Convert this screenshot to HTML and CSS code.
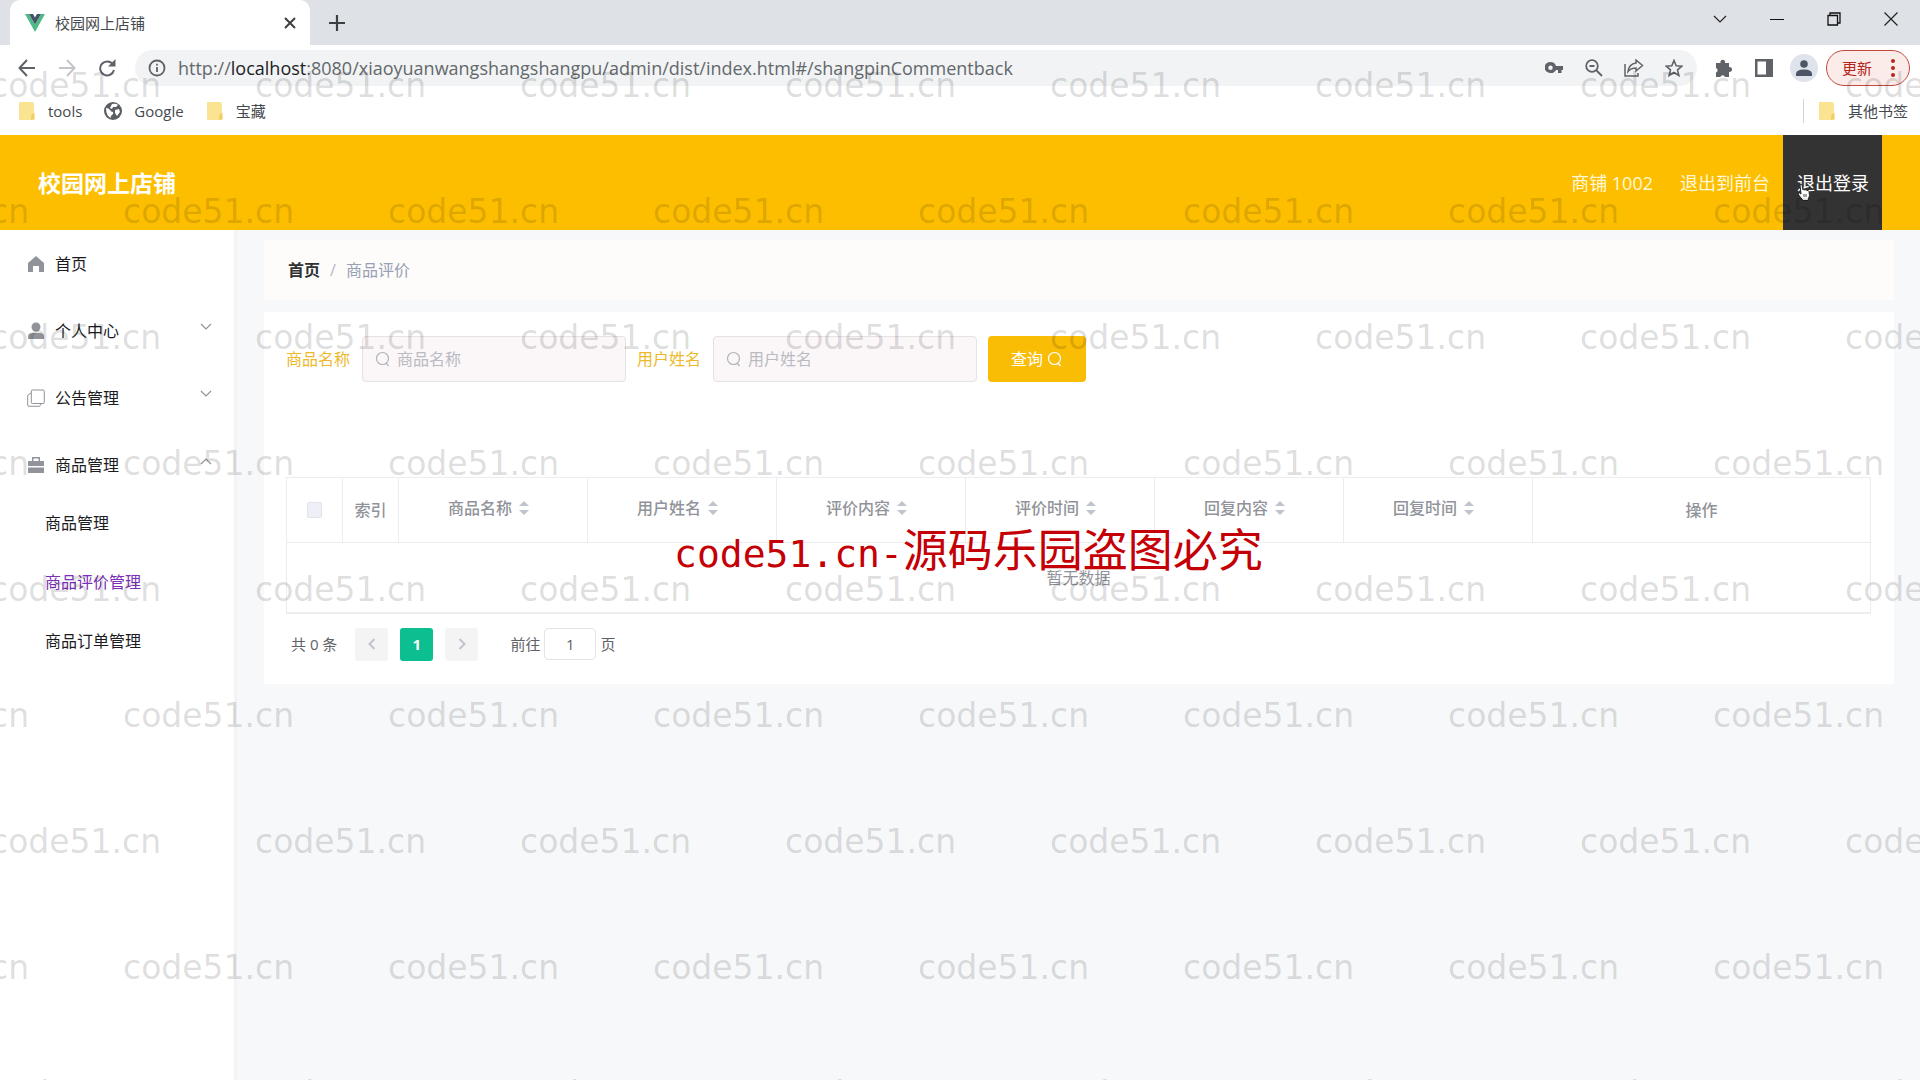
FILE: index.html
```html
<!DOCTYPE html>
<html lang="zh-CN">
<head>
<meta charset="utf-8">
<title>校园网上店铺</title>
<link rel="stylesheet" href="styles.css">
</head>
<body>
<svg class="defs" aria-hidden="true">
  <symbol id="folder" viewBox="0 0 18 20"><path d="M2 1h12q2 0 2 2v9l1 1v5q0 1-1 1H2q-1 0-1-1V2q0-1 1-1z" fill="#fbe491"/><path d="M13 19v-4l2-3h1v6z" fill="#f0cf6a"/></symbol>
  <symbol id="down" viewBox="0 0 12 8"><path d="M1 1l5 5 5-5" fill="none" stroke="currentColor" stroke-width="1.2"/></symbol>
  <symbol id="search" viewBox="0 0 16 16"><circle cx="7.5" cy="7.5" r="6" fill="none" stroke="currentColor" stroke-width="1.2"/><path d="M11 12l2.500 3" fill="none" stroke="currentColor" stroke-width="1.2"/></symbol>
  <symbol id="sort" viewBox="0 0 10 16"><path d="M0 6l5-5 5 5zM0 10l5 5 5-5z" fill="#c0c4cc"/></symbol>
</svg>

<div class="tabstrip">
  <div class="tab">
    <svg class="vue" viewBox="0 0 20 18"><path d="M0 0h4l6 10.500L16 0h4L10 18z" fill="#4dba87"/><path d="M4 0h4l2 3.500L12 0h4l-6 10.500z" fill="#435466"/></svg>
    <span class="tab-title">校园网上店铺</span>
    <button class="icon-btn" aria-label="关闭标签页"><svg width="12" height="12" viewBox="0 0 12 12"><path d="M1 1l10 10M11 1L1 11" stroke="#3c4043" stroke-width="2"/></svg></button>
  </div>
  <button class="icon-btn new-tab" aria-label="新标签页"><svg width="16" height="16" viewBox="0 0 16 16"><path d="M8 0v16M0 8h16" stroke="#3c4043" stroke-width="2.200"/></svg></button>
  <div class="window-controls">
    <button class="icon-btn" aria-label="搜索标签页"><svg width="14" height="9" viewBox="0 0 14 9"><path d="M1 1l6 6 6-6" fill="none" stroke="#222" stroke-width="1.200"/></svg></button>
    <button class="icon-btn" aria-label="最小化"><svg width="14" height="14" viewBox="0 0 14 14"><path d="M0 7.500h14" stroke="#111"/></svg></button>
    <button class="icon-btn" aria-label="还原"><svg width="14" height="14" viewBox="0 0 14 14" fill="none" stroke="#111" stroke-width="1.300"><path d="M1 3.500h9.500V13H1zM3 3V1h10v10h-2"/></svg></button>
    <button class="icon-btn" aria-label="关闭"><svg width="14" height="14" viewBox="0 0 14 14"><path d="M.5.5l13 13M13.500.5l-13 13" stroke="#222" stroke-width="1.200"/></svg></button>
  </div>
</div>

<div class="toolbar">
  <div class="nav-buttons">
    <button class="icon-btn" aria-label="后退"><svg width="18" height="18" viewBox="0 0 18 18" fill="none" stroke="#5f6368" stroke-width="2"><path d="M17 9H2M9 1L1.500 9 9 17"/></svg></button>
    <button class="icon-btn" aria-label="前进"><svg width="18" height="18" viewBox="0 0 18 18" fill="none" stroke="#c3c5c8" stroke-width="2"><path d="M1 9h15M9 1l7.500 8L9 17"/></svg></button>
    <button class="icon-btn" aria-label="刷新"><svg width="18" height="18" viewBox="0 0 18 18"><path d="M15 5.500A7 7 0 1 0 16 11" fill="none" stroke="#5f6368" stroke-width="2"/><path d="M17.500 0v7.500H10z" fill="#5f6368"/></svg></button>
  </div>
  <div class="omnibox">
    <svg width="18" height="18" viewBox="0 0 18 18"><circle cx="9" cy="9" r="7.500" fill="none" stroke="#5f6368" stroke-width="1.800"/><path d="M9 8v5M9 4.800v1.800" stroke="#5f6368" stroke-width="1.800"/></svg>
    <div class="url" role="textbox" aria-label="地址">http://<b>localhost</b>:8080/xiaoyuanwangshangshangpu/admin/dist/index.html#/shangpinCommentback</div>
    <button class="icon-btn" aria-label="密码"><svg width="18" height="12" viewBox="0 0 18 12"><path d="M5.500 0a6 5.500 0 0 1 5.500 4h7v4h-1.500v3H13V8h-2a6 5.500 0 1 1-5.500-8zm0 3.500a2.200 2.200 0 1 0 0 4.500 2.200 2.200 0 0 0 0-4.500z" fill="#5f6368"/></svg></button>
    <button class="icon-btn" aria-label="缩放"><svg width="18" height="18" viewBox="0 0 18 18" fill="none" stroke="#5f6368" stroke-width="1.800"><circle cx="7" cy="7" r="5.800"/><path d="M11.500 11.500L17 17M4.500 7h5"/></svg></button>
    <button class="icon-btn" aria-label="分享"><svg width="20" height="18" viewBox="0 0 20 18" fill="none" stroke="#5f6368" stroke-width="1.500"><path d="M1 5v12h13v-3"/><path d="M12 1l6.500 5.500L12 12V9q-5 0-8 3.500Q5 5 12 4z"/></svg></button>
    <button class="icon-btn" aria-label="收藏"><svg width="18" height="18" viewBox="0 0 18 18"><path d="M9 1.500l2.200 5.300 5.700.4-4.400 3.700 1.400 5.600L9 13.500l-4.900 3 1.400-5.600L1.100 7.200l5.700-.4z" fill="none" stroke="#5f6368" stroke-width="1.600"/></svg></button>
  </div>
  <div class="extensions">
    <button class="icon-btn" aria-label="扩展程序"><svg width="18" height="18" viewBox="0 0 18 18"><path d="M1 4h4.500a2.400 2.400 0 1 1 4.500 0H14v4.200a2.400 2.400 0 1 1 0 4.600V18H10a2.400 2.400 0 0 0-4.600 0H1v-4.500a2.400 2.400 0 0 0 0-4.500z" fill="#5f6368"/></svg></button>
    <button class="icon-btn" aria-label="侧边栏"><svg width="18" height="18" viewBox="0 0 18 18"><path d="M0 0h18v18H0zm2.500 2.500v13H11v-13z" fill="#5f6368"/></svg></button>
    <button class="icon-btn avatar" aria-label="用户"><svg width="16" height="16" viewBox="0 0 16 16" fill="#4b5566"><circle cx="8" cy="4" r="3.800"/><path d="M0 16v-2q0-4.500 8-4.500t8 4.500v2z"/></svg></button>
    <button class="update">更新<svg width="4" height="18" viewBox="0 0 4 18" fill="#b3261e"><circle cx="2" cy="2" r="2"/><circle cx="2" cy="9" r="2"/><circle cx="2" cy="16" r="2"/></svg></button>
  </div>
</div>

<div class="bookmarks">
  <a href="#tools"><svg class="folder"><use href="#folder"/></svg>tools</a>
  <a href="#google"><svg width="18" height="18" viewBox="0 0 18 18"><circle cx="9" cy="9" r="9" fill="#5a5d61"/><path d="M2 6q3 0 4 2t3 2q1 2-1 3t-1 3Q2 14 2 6zM8 2q4-1 6 1l-2 2-3 0-1 2-2-1zM11 8l4-1 1 3-3 4-2-3z" fill="#fff"/></svg>Google</a>
  <a href="#treasure"><svg class="folder"><use href="#folder"/></svg>宝藏</a>
  <a href="#other" class="other"><svg class="folder"><use href="#folder"/></svg>其他书签</a>
</div>

<header class="app-header">
  <h1>校园网上店铺</h1>
  <nav>
    <span>商铺 1002</span>
    <a href="#front">退出到前台</a>
    <a href="#logout" class="active">退出登录<svg class="cursor" viewBox="0 0 14 18"><path d="M3 1.500q1.500-1 2 .5L6 7q.5-1 2 0 1-1 2 .5 1.500-.5 2 1l.5 4-1.500 5H6L1 11q0-1.500 1.500-1l1.500 1z" fill="#fff" stroke="#222"/><path d="M7 11v3M9 11v3" stroke="#444"/></svg></a>
  </nav>
</header>

<div class="app-body">
  <aside>
    <ul class="menu">
      <li><a href="#home"><svg viewBox="0 0 18 18"><path d="M9 1l8 7v9h-5v-6H6v6H1V8z"/></svg>首页</a></li>
      <li><a href="#me"><svg viewBox="0 0 18 18"><circle cx="9" cy="5" r="4.500"/><path d="M1 17v-2q0-4 4-4h8q4 0 4 4v2z"/></svg>个人中心<svg class="arrow"><use href="#down"/></svg></a></li>
      <li><a href="#notice"><svg viewBox="0 0 18 18"><path d="M5 1h11q1.300 0 1.300 1.300v11q0 1.200-1.300 1.200H5.500q-1.200 0-1.200-1.200V2Q4.300 1 5 1zM4 4L1.700 5.500q-1 0-1 1V16q0 1.300 1.300 1.300h10.500L14 15" fill="none" stroke="currentColor"/></svg>公告管理<svg class="arrow"><use href="#down"/></svg></a></li>
      <li><a href="#goods"><svg viewBox="0 0 18 18"><path d="M5 5V1h8v4h4v5H1V5zm1.500 0h5V2.500h-5zM1 11.500h16V17H1z"/></svg>商品管理<svg class="arrow up"><use href="#down"/></svg></a>
        <ul class="submenu">
          <li><a href="#list">商品管理</a></li>
          <li><a href="#comments" class="current">商品评价管理</a></li>
          <li><a href="#orders">商品订单管理</a></li>
        </ul>
      </li>
    </ul>
  </aside>
  <main>
    <nav class="breadcrumb"><a href="#home">首页</a><i>/</i><span>商品评价</span></nav>
    <section class="panel">
      <form class="filters">
        <label for="goods">商品名称</label>
        <div class="field"><svg><use href="#search"/></svg><input id="goods" type="text" placeholder="商品名称"></div>
        <label for="user">用户姓名</label>
        <div class="field"><svg><use href="#search"/></svg><input id="user" type="text" placeholder="用户姓名"></div>
        <button type="button">查询<svg><use href="#search"/></svg></button>
      </form>
      <table>
        <colgroup><col class="c-small"><col class="c-small"><col class="c-sort"><col class="c-sort"><col class="c-sort"><col class="c-sort"><col class="c-sort"><col class="c-sort"><col></colgroup>
        <thead>
          <tr>
            <th><input type="checkbox" aria-label="全选" disabled></th>
            <th>索引</th>
            <th><span class="sortable">商品名称<svg><use href="#sort"/></svg></span></th>
            <th><span class="sortable">用户姓名<svg><use href="#sort"/></svg></span></th>
            <th><span class="sortable">评价内容<svg><use href="#sort"/></svg></span></th>
            <th><span class="sortable">评价时间<svg><use href="#sort"/></svg></span></th>
            <th><span class="sortable">回复内容<svg><use href="#sort"/></svg></span></th>
            <th><span class="sortable">回复时间<svg><use href="#sort"/></svg></span></th>
            <th>操作</th>
          </tr>
        </thead>
        <tbody><tr><td colspan="9">暂无数据</td></tr></tbody>
      </table>
      <div class="pagination">
        <span class="total">共 0 条</span>
        <button disabled aria-label="上一页"><svg width="8" height="12" viewBox="0 0 8 12"><path d="M6.500 1l-5 5 5 5"/></svg></button>
        <button class="on">1</button>
        <button disabled aria-label="下一页"><svg width="8" height="12" viewBox="0 0 8 12"><path d="M1.500 1l5 5-5 5"/></svg></button>
        <label class="jump">前往<input type="text" value="1">页</label>
      </div>
    </section>
  </main>
</div>

<div class="watermark" aria-hidden="true">
  <div><span>code51.cn</span><span>code51.cn</span><span>code51.cn</span><span>code51.cn</span><span>code51.cn</span><span>code51.cn</span><span>code51.cn</span><span>code51.cn</span></div>
  <div><span>code51.cn</span><span>code51.cn</span><span>code51.cn</span><span>code51.cn</span><span>code51.cn</span><span>code51.cn</span><span>code51.cn</span><span>code51.cn</span></div>
  <div><span>code51.cn</span><span>code51.cn</span><span>code51.cn</span><span>code51.cn</span><span>code51.cn</span><span>code51.cn</span><span>code51.cn</span><span>code51.cn</span></div>
  <div><span>code51.cn</span><span>code51.cn</span><span>code51.cn</span><span>code51.cn</span><span>code51.cn</span><span>code51.cn</span><span>code51.cn</span><span>code51.cn</span></div>
  <div><span>code51.cn</span><span>code51.cn</span><span>code51.cn</span><span>code51.cn</span><span>code51.cn</span><span>code51.cn</span><span>code51.cn</span><span>code51.cn</span></div>
  <div><span>code51.cn</span><span>code51.cn</span><span>code51.cn</span><span>code51.cn</span><span>code51.cn</span><span>code51.cn</span><span>code51.cn</span><span>code51.cn</span></div>
  <div><span>code51.cn</span><span>code51.cn</span><span>code51.cn</span><span>code51.cn</span><span>code51.cn</span><span>code51.cn</span><span>code51.cn</span><span>code51.cn</span></div>
  <div><span>code51.cn</span><span>code51.cn</span><span>code51.cn</span><span>code51.cn</span><span>code51.cn</span><span>code51.cn</span><span>code51.cn</span><span>code51.cn</span></div>
  <div><span>code51.cn</span><span>code51.cn</span><span>code51.cn</span><span>code51.cn</span><span>code51.cn</span><span>code51.cn</span><span>code51.cn</span><span>code51.cn</span></div>
</div>
<div class="notice"><span>code51.cn-</span>源码乐园盗图必究</div>
</body>
</html>
```
FILE: styles.css
```css
* { box-sizing: border-box; }

body {
  margin: 0;
  min-height: 100vh;
  display: flex;
  flex-direction: column;
  position: relative;
  overflow: hidden;
  background: #f7f8fa;
  font: 16px/24px "Open Sans", "Noto Sans CJK SC", sans-serif;
  color: #303133;
}

a { color: inherit; text-decoration: none; }
ul { list-style: none; margin: 0; padding: 0; }
button, input { font: inherit; color: inherit; }
svg { display: block; flex: none; }
.defs { position: absolute; width: 0; height: 0; }

.icon-btn {
  display: flex;
  align-items: center;
  justify-content: center;
  border: 0;
  padding: 0;
  background: none;
}

/* Browser tab strip */
.tabstrip { display: flex; height: 45px; padding: 0 1px 0 10px; background: #dee1e6; }
.tab {
  display: flex;
  align-items: center;
  width: 300px;
  padding: 0 14px 0 15px;
  border-radius: 10px 10px 0 0;
  background: #fff;
}
.vue { width: 20px; height: 18px; }
.tab-title { flex: 1; margin-left: 10px; font-size: 15px; color: #45494d; }
.new-tab { width: 54px; }
.window-controls { display: flex; margin-left: auto; height: 38px; }
.window-controls .icon-btn { width: 57px; }

/* Address row */
.toolbar { display: flex; align-items: center; height: 46px; padding-right: 10px; background: #fff; }
.nav-buttons { display: flex; padding: 0 7px; }
.nav-buttons .icon-btn { width: 40px; }
.omnibox {
  flex: 1;
  display: flex;
  align-items: center;
  height: 36px;
  margin-left: 1px;
  padding: 0 3px 0 13px;
  border-radius: 18px;
  background: #f1f3f4;
}
.omnibox .icon-btn { width: 40px; }
.url { flex: 1; margin-left: 12px; font-size: 18px; color: #64686c; white-space: nowrap; }
.url b { font-weight: 400; color: #202124; }
.extensions { display: flex; align-items: center; margin-left: 7px; }
.extensions .icon-btn { width: 40px; }
.extensions .avatar { width: 28px; height: 28px; margin: 0 8px 0 6px; border-radius: 50%; background: #dfe4ec; }
.update {
  display: flex;
  align-items: center;
  justify-content: space-between;
  width: 84px;
  height: 36px;
  padding: 0 14px 0 15px;
  border: 1px solid #c5483f;
  border-radius: 18px;
  background: #fbecea;
  font-size: 15px;
  color: #b3261e;
}

.bookmarks {
  display: flex;
  align-items: center;
  gap: 22px;
  height: 44px;
  padding: 0 12px 4px 18px;
  background: #fff;
  font-size: 15px;
  color: #45494d;
}
.bookmarks a { display: flex; align-items: center; gap: 12px; }
.folder { width: 18px; height: 20px; }
.bookmarks .other { margin-left: auto; padding-left: 14px; border-left: 1px solid #d0d3d8; }

/* Application header */
.app-header {
  display: flex;
  align-items: center;
  justify-content: space-between;
  height: 95px;
  padding: 0 38px;
  background: #fdbe00;
  color: #fff;
}
.app-header h1 { margin: 0; font-size: 23px; }
.app-header nav { display: flex; align-self: stretch; font-size: 18px; line-height: 96px; color: #fff8d8; }
.app-header nav > * { padding: 0 13px 0 14px; }
.app-header .active { position: relative; background: #333; color: #fff; }
.cursor { position: absolute; left: 14px; top: 48px; width: 14px; height: 18px; }

.app-body { flex: 1; display: flex; }
aside { width: 237px; border-right: 3px solid #f4f4f6; background: #fff; color: #1c1c1e; }
.menu > li > a { display: flex; align-items: center; gap: 10px; height: 67px; padding: 0 22px 0 27px; }
.menu svg { width: 18px; height: 18px; fill: #909399; color: #909399; }
.menu .arrow { width: 12px; height: 8px; margin: 0 0 8px auto; }
.menu .up { transform: rotate(180deg); }
.submenu a { display: block; margin-bottom: 8px; padding-left: 45px; line-height: 51px; }
.submenu .current { color: #7a2fb5; }

/* Content area */
main { flex: 1; padding: 10px 26px 0 27px; }
.breadcrumb { display: flex; gap: 10px; padding: 18px 24px; background: #fefcfb; }
.breadcrumb a { font-weight: 700; }
.breadcrumb i { font-style: normal; color: #b4b8c0; }
.breadcrumb span { color: #97a0b4; }
.panel { margin-top: 12px; padding: 24px 23px 23px 22px; background: #fff; }

.filters { display: flex; align-items: center; margin-bottom: 95px; }
.filters label { color: #ecb92c; }
.field {
  display: flex;
  align-items: center;
  gap: 6px;
  width: 264px;
  height: 46px;
  margin: 0 11px 0 12px;
  padding-left: 12px;
  border: 1px solid #e6e2e4;
  border-radius: 4px;
  background: #fbf6f7;
  color: #b3b5bd;
}
.filters svg { width: 16px; height: 16px; }
.field input { flex: 1; min-width: 0; border: 0; padding: 0; background: none; outline: 0; }
.field input::placeholder { color: #b9bbc3; opacity: 1; }
.filters button {
  display: flex;
  align-items: center;
  justify-content: center;
  gap: 4px;
  width: 98px;
  height: 46px;
  border: 0;
  border-radius: 4px;
  background: #fabd05;
  color: #fff;
}

table { width: 100%; table-layout: fixed; border-collapse: collapse; }
.c-small { width: 56px; }
.c-sort { width: 189px; }
th, td { padding: 0; border: 1px solid #ebeef0; text-align: center; color: #909399; }
th { height: 65px; font-weight: 500; }
td { height: 70px; padding-top: 2px; border-bottom-width: 2px; font-weight: 400; }
th input { appearance: none; display: block; width: 15px; height: 16px; margin: 0 auto; border: 1px solid #e0e3ea; border-radius: 2px; background: #edf0f6; }
.sortable { display: inline-flex; align-items: center; gap: 7px; padding: 0 9px 4px 0; }
.sortable svg { width: 10px; height: 16px; }

.pagination { display: flex; align-items: center; margin-top: 14px; padding-left: 5px; font-size: 15px; color: #606266; }
.total { margin-right: 12px; }
.pagination button {
  display: flex;
  align-items: center;
  justify-content: center;
  width: 33px;
  height: 33px;
  margin: 0 6px;
  padding: 0;
  border: 0;
  border-radius: 3px;
  background: #f4f4f5;
}
.pagination path { fill: none; stroke: #c0c4cc; stroke-width: 2; }
.pagination .on { background: #0bbf90; color: #fff; font-weight: 700; }
.jump { display: flex; align-items: center; gap: 4px; margin-left: 26px; }
.jump input { width: 52px; height: 32px; padding: 0; border: 1px solid #e2e4e9; border-radius: 4px; background: #fff; text-align: center; }

/* Repeated mark laid over the whole window */
.watermark {
  position: absolute;
  inset: 23px 0 0 -10px;
  overflow: hidden;
  pointer-events: none;
  font: 33px/126px "DejaVu Sans", sans-serif;
  color: rgba(0, 0, 0, .14);
}
.watermark div { display: flex; height: 126px; }
.watermark div:nth-child(even) { margin-left: -132px; }
.watermark span { flex: none; width: 265px; }
.notice {
  position: absolute;
  left: 674px;
  top: 518px;
  font: 45px/60px "Noto Sans CJK SC", sans-serif;
  color: #c40006;
  white-space: nowrap;
}
.notice span { font-family: "DejaVu Sans Mono", monospace; font-size: 38px; }
```
